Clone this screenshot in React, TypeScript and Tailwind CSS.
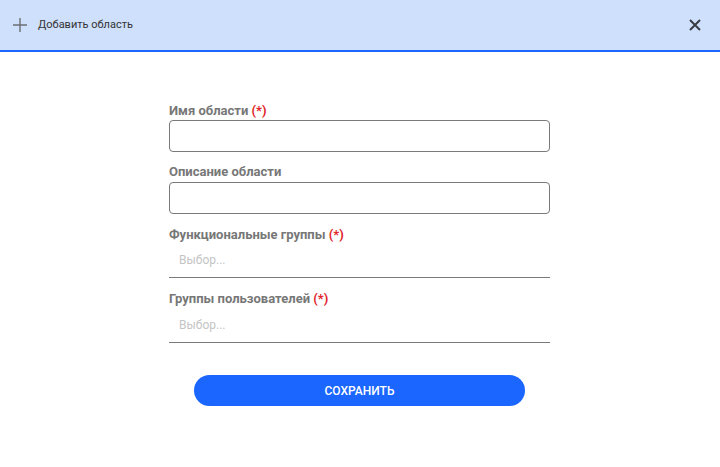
import React from "react";

function Label({ text, req }: { text: string; req?: boolean }) {
  return (
    <div className="text-[13px] leading-[16px] font-bold text-[#777777]">
      {text}
      {req && <span className="text-[#e0262b]"> (*)</span>}
    </div>
  );
}

export default function App() {
  return (
    <div className="w-[720px] h-[467px] bg-white" style={{ fontFamily: "Roboto, 'Noto Sans', sans-serif" }}>
      <div className="h-[52px] bg-[#cfe0fc] border-b-2 border-[#1a66ff] flex items-center pl-[12px] pr-[19px]">
        <svg width="16" height="16" viewBox="0 0 16 16" className="mr-[10px]">
          <path d="M8 1V15M1 8H15" stroke="#6b6f75" strokeWidth="1.4" />
        </svg>
        <span className="text-[11px] text-[#333333] pt-[1px]">Добавить область</span>
        <div className="flex-1" />
        <svg width="12" height="12" viewBox="0 0 12 12">
          <path d="M1 1L11 11M11 1L1 11" stroke="#3a3d42" strokeWidth="2" />
        </svg>
      </div>
      <div className="flex flex-col pt-[51px]">
        <div className="ml-[169px] w-[381px] flex flex-col">
          <Label text="Имя области" req />
          <div className="mt-[1px] h-[32px] border border-[#7a7a7a] rounded-[4px]" />
          <div className="mt-[12px]">
            <Label text="Описание области" />
          </div>
          <div className="mt-[2px] h-[32px] border border-[#7a7a7a] rounded-[4px]" />
          <div className="mt-[13px]">
            <Label text="Функциональные группы" req />
          </div>
          <div className="h-[35px] border-b border-[#7a7a7a] flex items-center pl-[10px] text-[12px] text-[#c4c4c4]">
            Выбор...
          </div>
          <div className="mt-[13px]">
            <Label text="Группы пользователей" req />
          </div>
          <div className="h-[36px] border-b border-[#7a7a7a] flex items-center pl-[10px] text-[12px] text-[#c4c4c4]">
            Выбор...
          </div>
        </div>
        <button className="ml-[194px] mt-[32px] w-[331px] h-[31px] rounded-full bg-[#1a66ff] text-white text-[12px] font-medium">
          СОХРАНИТЬ
        </button>
      </div>
    </div>
  );
}
